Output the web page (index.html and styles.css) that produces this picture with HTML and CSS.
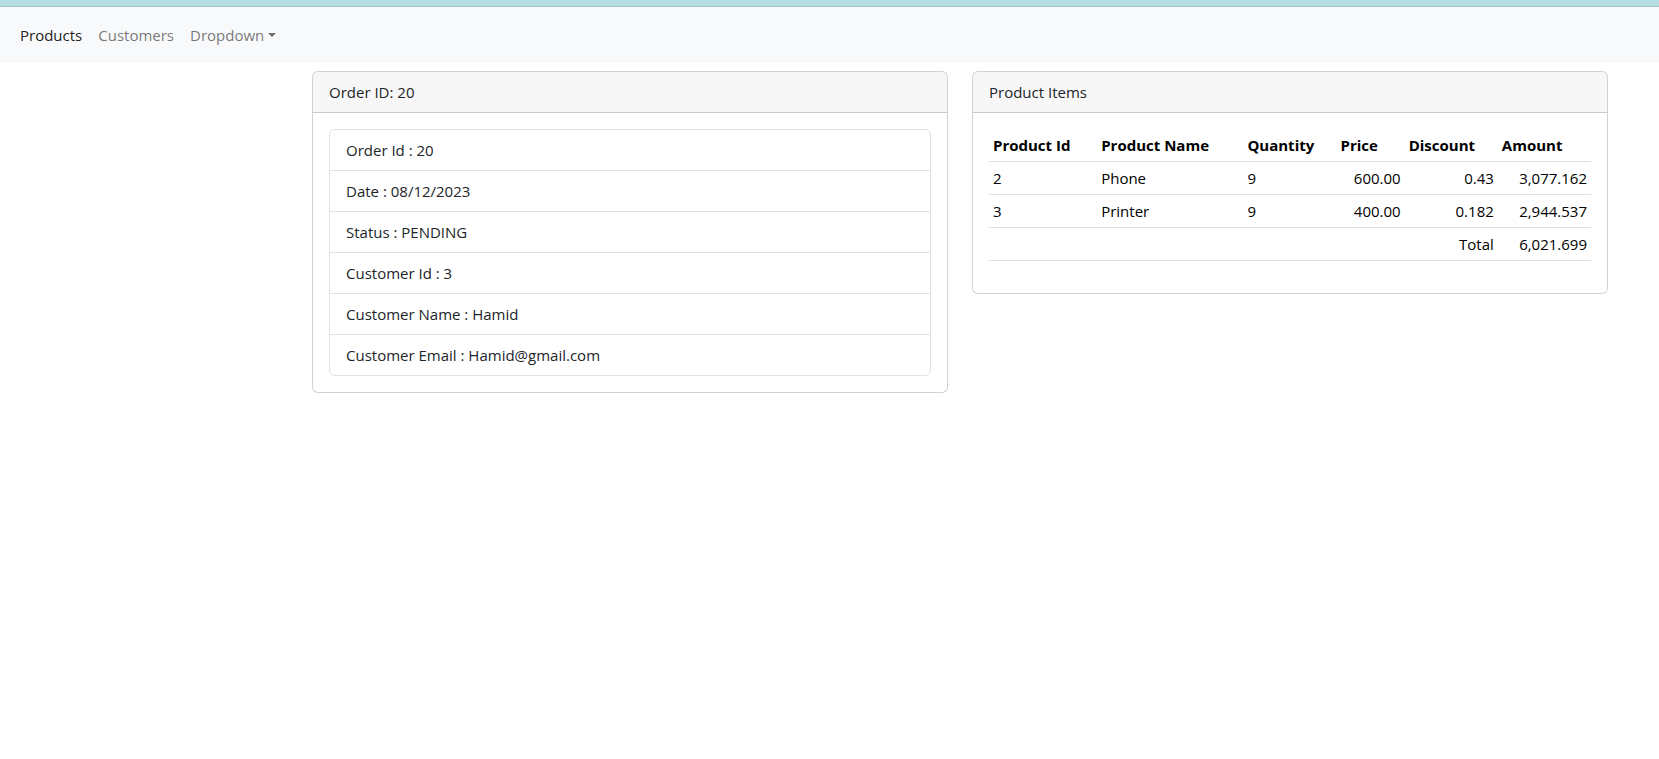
FILE: index.html
```html
<!DOCTYPE html>
<html lang="en">
<head>
<meta charset="utf-8">
<title>Order 20</title>
<link rel="stylesheet" href="styles.css">
</head>
<body>
<div class="topstrip"></div>
<nav class="navbar">
  <ul class="nav">
    <li><a class="nav-link active" href="#">Products</a></li>
    <li><a class="nav-link" href="#">Customers</a></li>
    <li><a class="nav-link dropdown-toggle" href="#">Dropdown</a></li>
  </ul>
</nav>
<main class="content">
  <section class="col">
    <div class="card">
      <div class="card-header">Order ID: 20</div>
      <div class="card-body">
        <ul class="list-group">
          <li class="list-item">Order Id : 20</li>
          <li class="list-item">Date : 08/12/2023</li>
          <li class="list-item">Status : PENDING</li>
          <li class="list-item">Customer Id : 3</li>
          <li class="list-item">Customer Name : Hamid</li>
          <li class="list-item">Customer Email : Hamid@gmail.com</li>
        </ul>
      </div>
    </div>
  </section>
  <section class="col">
    <div class="card">
      <div class="card-header">Product Items</div>
      <div class="card-body">
        <table class="table">
          <thead>
            <tr>
              <th class="c-id">Product Id</th>
              <th class="c-name">Product Name</th>
              <th class="c-qty">Quantity</th>
              <th class="c-price">Price</th>
              <th class="c-disc">Discount</th>
              <th class="c-amt">Amount</th>
            </tr>
          </thead>
          <tbody>
            <tr>
              <td>2</td><td>Phone</td><td>9</td>
              <td class="num">600.00</td><td class="num">0.43</td><td class="num">3,077.162</td>
            </tr>
            <tr>
              <td>3</td><td>Printer</td><td>9</td>
              <td class="num">400.00</td><td class="num">0.182</td><td class="num">2,944.537</td>
            </tr>
            <tr>
              <td></td><td></td><td></td><td></td>
              <td class="num">Total</td><td class="num">6,021.699</td>
            </tr>
          </tbody>
        </table>
      </div>
    </div>
  </section>
</main>
</body>
</html>
```

FILE: styles.css
```css
* { box-sizing: border-box; }

body {
  margin: 0;
  font-family: "Open Sans", "Noto Sans", sans-serif;
  font-size: 15px;
  line-height: 24px;
  color: #212529;
  background: #fff;
}

.topstrip {
  height: 7px;
  background: #b7e0e3;
  border-bottom: 1px solid #9fc3c7;
}

.navbar {
  background: #f8f9fa;
  padding: 8px 12px;
}

.nav {
  display: flex;
  list-style: none;
  margin: 0;
  padding: 0;
}

.nav-link {
  display: block;
  padding: 8px;
  color: rgba(0, 0, 0, 0.55);
  text-decoration: none;
}

.nav-link.active {
  color: rgba(0, 0, 0, 0.9);
}

.dropdown-toggle::after {
  content: "";
  display: inline-block;
  margin-left: 4px;
  vertical-align: 4px;
  border-top: 4.8px solid;
  border-right: 4.8px solid transparent;
  border-left: 4.8px solid transparent;
  border-bottom: 0;
}

.content {
  display: flex;
  align-items: flex-start;
  gap: 24px;
  margin-top: 8px;
  padding-left: 312px;
}

.col {
  width: 636px;
  flex: none;
}

.card {
  border: 1px solid rgba(0, 0, 0, 0.175);
  border-radius: 6px;
  background: #fff;
  overflow: hidden;
}

.card-header {
  padding: 8px 16px;
  background: rgba(0, 0, 0, 0.03);
  border-bottom: 1px solid rgba(0, 0, 0, 0.175);
}

.card-body {
  padding: 16px;
}

.list-group {
  list-style: none;
  margin: 0;
  padding: 0;
  border: 1px solid #dee2e6;
  border-radius: 6px;
}

.list-item {
  padding: 8px 16px;
  border-top: 1px solid #dee2e6;
}

.list-item:first-child {
  border-top: 0;
}

.table {
  width: 100%;
  border-collapse: collapse;
  margin-bottom: 16px;
  table-layout: fixed;
}

.table th,
.table td {
  padding: 4px;
  border-bottom: 1px solid #dee2e6;
  text-align: left;
  font-weight: normal;
  white-space: nowrap;
}

.table th {
  font-weight: 700;
  color: #000;
}

.table td {
  color: #000;
}

.table td.num {
  text-align: right;
}

.c-id { width: 108px; }
.c-name { width: 146px; }
.c-qty { width: 93px; }
.c-price { width: 68px; }
.c-disc { width: 93px; }
.c-amt { width: 93px; }
```
